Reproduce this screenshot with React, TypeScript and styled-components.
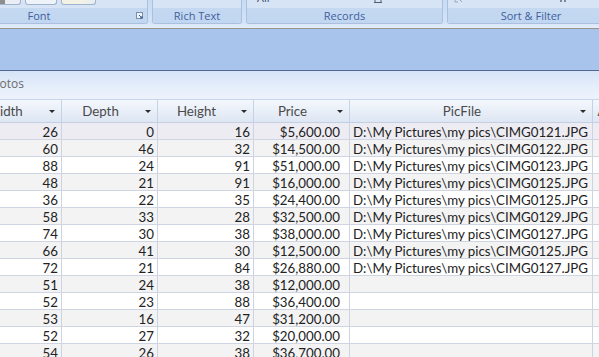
import React from 'react'
import styled, { createGlobalStyle } from 'styled-components'

type Row = {
  width: number;
  depth: number;
  height: number;
  price: string;
  picFile: string;
};

const pic = (n: string) => `D:\\My Pictures\\my pics\\CIMG${n}.JPG`;

const rows: Row[] = [
  { width: 26, depth: 0, height: 16, price: '$5,600.00', picFile: pic('0121') },
  { width: 60, depth: 46, height: 32, price: '$14,500.00', picFile: pic('0122') },
  { width: 88, depth: 24, height: 91, price: '$51,000.00', picFile: pic('0123') },
  { width: 48, depth: 21, height: 91, price: '$16,000.00', picFile: pic('0125') },
  { width: 36, depth: 22, height: 35, price: '$24,400.00', picFile: pic('0125') },
  { width: 58, depth: 33, height: 28, price: '$32,500.00', picFile: pic('0129') },
  { width: 74, depth: 30, height: 38, price: '$38,000.00', picFile: pic('0127') },
  { width: 66, depth: 41, height: 30, price: '$12,500.00', picFile: pic('0125') },
  { width: 72, depth: 21, height: 84, price: '$26,880.00', picFile: pic('0127') },
  { width: 51, depth: 24, height: 38, price: '$12,000.00', picFile: '' },
  { width: 52, depth: 23, height: 88, price: '$36,400.00', picFile: '' },
  { width: 53, depth: 16, height: 47, price: '$31,200.00', picFile: '' },
  { width: 52, depth: 27, height: 32, price: '$20,000.00', picFile: '' },
  { width: 54, depth: 26, height: 38, price: '$36,700.00', picFile: '' },
];

const columns = [
  { title: 'Width', size: 96, arrow: true },
  { title: 'Depth', size: 96, arrow: true },
  { title: 'Height', size: 96, arrow: true },
  { title: 'Price', size: 96, arrow: true },
  { title: 'PicFile', size: 243, arrow: true },
  { title: 'Add New Field', size: 96, arrow: false },
];

const GlobalStyle = createGlobalStyle`
  html, body {
    margin: 0;
    padding: 0;
    overflow: hidden;
    background: #ffffff;
  }
`;

const Page = styled.div`
  width: 599px;
  height: 357px;
  overflow: hidden;
  display: flex;
  flex-direction: column;
`;

/* ribbon */

const Ribbon = styled.div`
  height: 28px;
  flex: none;
  display: flex;
  gap: 4px;
  background: linear-gradient(#c9dcf3, #d3e3f7 80%, #e4eefa);
  border-bottom: 1px solid #9b9487;
  overflow: hidden;
`;

const Group = styled.div<{ $w: number; $shift?: number }>`
  flex: none;
  width: ${(p) => p.$w}px;
  margin-left: ${(p) => p.$shift ?? 0}px;
  height: 23px;
  display: flex;
  flex-direction: column;
  border: 1px solid #a9c0de;
  border-top: none;
  border-radius: 0 0 3px 3px;
  background: #d6e4f6;
  box-shadow: inset 0 -1px 0 #e2ecf9;
`;

const Controls = styled.div`
  height: 8px;
  display: flex;
  align-items: flex-start;
  gap: 4px;
  padding: 0 6px;
  overflow: hidden;
`;

const GroupLabel = styled.div`
  flex: 1;
  position: relative;
  display: flex;
  align-items: center;
  justify-content: center;
  background: linear-gradient(#c4d8f1, #c1d6f0);
  font-family: 'Open Sans', 'DejaVu Sans', sans-serif;
  font-size: 11px;
  color: #3f5f9d;
  border-radius: 0 0 3px 3px;
`;

const Launcher = styled.svg`
  position: absolute;
  right: 4px;
  top: 4px;
`;

const ButtonStub = styled.div<{ $w: number; $fill: string }>`
  width: ${(p) => p.$w}px;
  height: 5px;
  margin-top: -1px;
  border: 1px solid #9fb3cf;
  border-top: none;
  border-radius: 0 0 3px 3px;
  background: ${(p) => p.$fill};
  overflow: hidden;
`;

const CutLabel = styled.span`
  font-family: 'Open Sans', 'DejaVu Sans', sans-serif;
  font-size: 11px;
  line-height: 11px;
  color: #3f4f6a;
  margin-top: -8px;
`;

/* band + tabs */

const Band = styled.div`
  height: 41px;
  flex: none;
  background: #a8c3ec;
  border-bottom: 1px solid #53698f;
`;

const TabStrip = styled.div`
  height: 28px;
  flex: none;
  display: flex;
  align-items: center;
  background: linear-gradient(#d6e4f7, #e6eefb 60%, #edf3fc);
  border-bottom: 1px solid #c6d6ec;
  overflow: hidden;
`;

const TabTitle = styled.span`
  margin-left: -15px;
  margin-top: -3px;
  font-family: 'Open Sans', 'DejaVu Sans', sans-serif;
  font-size: 12px;
  color: #6b6b6b;
`;

/* datasheet */

const Sheet = styled.div`
  flex: 1;
  margin-left: -34px;
  overflow: hidden;
  font-family: Lato, 'Liberation Sans', sans-serif;
  font-size: 13.3px;
`;

const HeaderRow = styled.div`
  display: flex;
  height: 22px;
  background: linear-gradient(#f4f7fc, #e9eff8 50%, #dde6f3);
  border-bottom: 1px solid #c3cfe2;
`;

const HeaderCell = styled.div<{ $w: number }>`
  flex: none;
  width: ${(p) => p.$w}px;
  box-sizing: border-box;
  display: flex;
  align-items: center;
  border-right: 1px solid #c4d1e6;
  color: #4a4a4a;
  overflow: hidden;
`;

const HeaderText = styled.span`
  flex: 1;
  text-align: center;
  white-space: nowrap;
`;

const SortArrow = styled.span`
  flex: none;
  width: 18px;
  display: flex;
  justify-content: center;
  &::after {
    content: '';
    border-left: 3px solid transparent;
    border-right: 3px solid transparent;
    border-top: 3px solid #2b2b2b;
  }
`;

const DataRow = styled.div<{ $shade: 'current' | 'alt' | 'plain' }>`
  display: flex;
  height: 16px;
  border-bottom: 1px solid #d0d5e4;
  background: ${(p) =>
    p.$shade === 'current' ? '#eeecf3' : p.$shade === 'alt' ? '#f3f3f4' : '#ffffff'};
`;

const Cell = styled.div<{ $w: number; $align?: 'left' | 'right'; $padRight?: number }>`
  flex: none;
  width: ${(p) => p.$w}px;
  box-sizing: border-box;
  padding: 0 ${(p) => p.$padRight ?? 3}px 0 3px;
  border-right: 1px solid #cdd3e3;
  text-align: ${(p) => p.$align ?? 'right'};
  line-height: 18px;
  color: #222222;
  white-space: nowrap;
  overflow: hidden;
`;

export default function App() {
  return (
    <Page>
      <GlobalStyle />
      <Ribbon>
        <Group $w={216} $shift={-70}>
          <Controls>
            <div style={{ width: 56 }} />
            <ButtonStub $w={22} $fill="linear-gradient(90deg,#8d8d8d 30%,#e9eef5 31%)" />
            <ButtonStub $w={30} $fill="#eef3fa">
              <svg width="30" height="5" viewBox="0 0 30 5">
                <path d="M4 0v4M9 0v4M14 0v4M19 0v4M4 3.5h15" stroke="#2c4f92" strokeWidth="1" fill="none" />
              </svg>
            </ButtonStub>
            <ButtonStub $w={33} $fill="linear-gradient(90deg,#f4f1e6 60%,#e6ecf4)" />
          </Controls>
          <GroupLabel>
            Font
            <Launcher width="7" height="7" viewBox="0 0 7 7">
              <rect x="0.5" y="0.5" width="6" height="6" fill="#eef3fa" stroke="#7c8fae" />
              <path d="M3 3l3 3M4 6h2V4" stroke="#3c5a8e" fill="none" />
            </Launcher>
          </GroupLabel>
        </Group>
        <Group $w={88}>
          <Controls />
          <GroupLabel>Rich Text</GroupLabel>
        </Group>
        <Group $w={195}>
          <Controls>
            <div style={{ width: 0 }} />
            <CutLabel>All</CutLabel>
            <div style={{ width: 96 }} />
            <svg width="8" height="3" viewBox="0 0 8 3">
              <path d="M0 2.5h8M1 0v3M7 0v3" stroke="#55606e" fill="none" />
            </svg>
          </Controls>
          <GroupLabel>Records</GroupLabel>
        </Group>
        <Group $w={166}>
          <Controls>
            <svg width="10" height="3" viewBox="0 0 10 3">
              <path d="M1 0v2h3M6 0l2 2" stroke="#9aa6b6" fill="none" />
            </svg>
            <div style={{ width: 88 }} />
            <svg width="8" height="3" viewBox="0 0 8 3">
              <path d="M1 0v2M5 0v2" stroke="#7e8898" strokeWidth="2" fill="none" />
            </svg>
          </Controls>
          <GroupLabel>Sort &amp; Filter</GroupLabel>
        </Group>
      </Ribbon>
      <Band />
      <TabStrip>
        <TabTitle>Photos</TabTitle>
      </TabStrip>
      <Sheet>
        <HeaderRow>
          {columns.map((c) => (
            <HeaderCell key={c.title} $w={c.size}>
              <HeaderText>{c.title}</HeaderText>
              {c.arrow && <SortArrow />}
            </HeaderCell>
          ))}
        </HeaderRow>
        {rows.map((r, i) => (
          <DataRow key={i} $shade={i === 0 ? 'current' : i % 2 === 1 ? 'alt' : 'plain'}>
            <Cell $w={96}>{r.width}</Cell>
            <Cell $w={96}>{r.depth}</Cell>
            <Cell $w={96}>{r.height}</Cell>
            <Cell $w={96} $padRight={9}>{r.price}</Cell>
            <Cell $w={243} $align="left">{r.picFile}</Cell>
            <Cell $w={96} $align="left" />
          </DataRow>
        ))}
      </Sheet>
    </Page>
  )
}
